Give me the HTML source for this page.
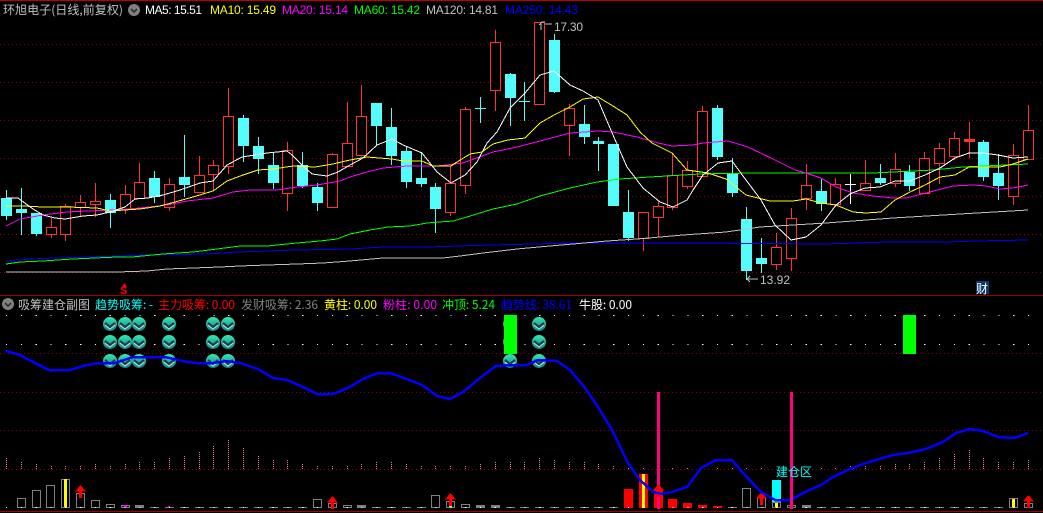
<!DOCTYPE html>
<html><head><meta charset="utf-8"><style>
html,body{margin:0;padding:0;background:#000;width:1043px;height:513px;overflow:hidden}
svg{display:block}
text{font-family:"Liberation Sans","WenQuanYi Zen Hei","Noto Sans CJK SC",sans-serif;font-size:12px}
.c{font-family:"WenQuanYi Zen Hei","Noto Sans CJK SC","Liberation Sans",sans-serif}
.l{fill:none;shape-rendering:crispEdges}
</style></head><body>
<svg width="1043" height="513" viewBox="0 0 1043 513" xmlns="http://www.w3.org/2000/svg">
<defs>
<linearGradient id="g" x1="0" y1="0" x2="0" y2="1"><stop offset="0" stop-color="#35e8b0"/><stop offset="1" stop-color="#158088"/></linearGradient>
<g id="i"><circle r="7" fill="url(#g)"/><path d="M-5 1L0 5L5 1" fill="none" stroke="#b8e8e0" stroke-width="1.2"/><path d="M-5 -1L0 3L5 -1" fill="none" stroke="#1d3f4d" stroke-width="2.2"/></g>
<path id="a" d="M0 0L5.500 6.500H1.500V13H-1.500V6.500H-5.500Z" fill="#ff0000" shape-rendering="crispEdges"/>
<g id="m"><circle r="6" fill="#808080"/><path d="M-3 -1L0 2L3 -1" fill="none" stroke="#303030" stroke-width="1.6"/></g>
</defs>
<rect width="1043" height="513" fill="#000"/>
<rect x="0" y="0" width="1043" height="1" fill="#c00000"/>
<rect x="0" y="295" width="1043" height="1" fill="#a00000"/>
<rect x="0" y="511" width="1043" height="1" fill="#a00000"/>
<path class="l" stroke="#900000" stroke-dasharray="1 3" d="M0 44.500H1043M0 82.500H1043M0 120.500H1043M0 158.500H1043M0 196.500H1043M0 234.500H1043M0 272.500H1043M0 353.500H1043M0 392.500H1043M0 430.500H1043M0 469.500H1043"/>

<!-- red wicks -->
<path class="l" stroke="#ff3232" d="M51.500 218V238M65.500 204V241M80.500 195V217M95.500 183V217M125.500 185V214M139.500 163V198M169.500 178V211M199.500 156V193M213.500 160V190M228.500 88V174M287.500 142V211M332.500 153V207M347.500 102V166M361.500 85V157M450.500 166V216M465.500 107V194M495.500 30V111M539.500 22V104M569.500 104V156M643.500 212V251M658.500 201V237M672.500 154V210M687.500 161V189M702.500 106V176M776.500 233V270M791.500 208V271M806.500 164V210M835.500 178V207M865.500 160V190M895.500 153V187M924.500 152V193M939.500 143V184M954.500 132V160M969.500 122V158M1013.500 144V205M1028.500 105V159"/>
<!-- red bodies -->
<path class="l" style="fill:#000" stroke="#ff3232" d="M46.500 227.500h10v7h-10zM60.500 206.500h10v28h-10zM75.500 202.500h10v5h-10zM90.500 201.500h10v3h-10zM120.500 194.500h10v15h-10zM134.500 182.500h10v16h-10zM164.500 184.500h10v23h-10zM194.500 175.500h10v17h-10zM208.500 165.500h10v9h-10zM223.500 116.500h10v50h-10zM282.500 150.500h10v43h-10zM327.500 154.500h10v53h-10zM342.500 143.500h10v23h-10zM356.500 116.500h10v39h-10zM445.500 183.500h10v29h-10zM460.500 109.500h10v76h-10zM490.500 42.500h10v48h-10zM534.500 22.500h10v82h-10zM564.500 108.500h10v17h-10zM638.500 212.500h10v26h-10zM653.500 206.500h10v11h-10zM667.500 175.500h10v32h-10zM682.500 170.500h10v16h-10zM697.500 111.500h10v65h-10zM771.500 247.500h10v17h-10zM786.500 218.500h10v40h-10zM801.500 185.500h10v13h-10zM830.500 184.500h10v20h-10zM860.500 183.500h10v7h-10zM890.500 169.500h10v14h-10zM919.500 158.500h10v35h-10zM934.500 148.500h10v15h-10zM949.500 138.500h10v18h-10zM1008.500 155.500h10v41h-10zM1023.500 130.500h10v29h-10z"/>
<rect x="964" y="139" width="11" height="3" fill="#ff3232"/>
<!-- cyan wicks -->
<path class="l" stroke="#54fcfc" d="M6.500 190V220M21.500 188V235M36.500 213V236M110.500 194V228M154.500 171V203M184.500 135V197M243.500 115V162M258.500 137V174M273.500 152V189M302.500 152V188M317.500 183V211M376.500 103V145M391.500 108V165M406.500 146V188M421.500 152V187M435.500 183V233M480.500 97V123M475 108.500H486M510.500 73V126M524.500 82V121M519 101.500H530M554.500 34V93M584.500 105V144M598.500 137V171M628.500 190V241M717.500 105V160M732.500 158V197M746.500 207V280M761.500 238V273M821.500 179V211M880.500 164V185M909.500 165V191M983.500 140V181M998.500 154V200"/>
<!-- cyan bodies -->
<path fill="#54fcfc" shape-rendering="crispEdges" d="M1 198h11v18h-11zM16 209h11v4h-11zM31 213h11v21h-11zM105 200h11v13h-11zM149 178h11v19h-11zM179 177h11v8h-11zM238 118h11v28h-11zM253 146h11v13h-11zM268 165h11v18h-11zM297 165h11v21h-11zM312 187h11v16h-11zM371 103h11v23h-11zM386 127h11v29h-11zM401 151h11v31h-11zM416 178h11v6h-11zM430 187h11v22h-11zM505 74h11v24h-11zM549 40h11v52h-11zM579 124h11v13h-11zM593 141h11v3h-11zM608 144h11v62h-11zM623 212h11v26h-11zM712 108h11v49h-11zM727 173h11v20h-11zM741 219h11v52h-11zM756 258h11v6h-11zM816 191h11v13h-11zM875 178h11v5h-11zM904 172h11v14h-11zM978 142h11v35h-11zM993 173h11v13h-11z"/>
<path class="l" stroke="#fff" d="M850.500 174V204M845 184.500H856"/>

<!-- MA lines -->
<polyline class="l" stroke="#0000ff" points="6,261 30,259 57,258 90,257 147,255 207,254 237,252 297,250 350,249 383,247 428,247 490,245 577,243 700,243 826,244 886,242 946,242 976,241 1028,240"/>
<polyline class="l" stroke="#00ff00" points="6,264 20,262 43,261 73,259 117,257 132,257 163,254 193,252 217,249 240,246 267,246 297,243 320,241 337,239 350,234 370,230 388,227 410,226 427,223 453,221 467,217 493,209 517,204 540,196 570,188 597,182 620,179 650,177 700,174 753,173 873,173 933,170 963,167 1028,164"/>
<polyline class="l" stroke="#c0c0c0" points="6,272 117,272 147,271 167,269 193,268 220,267 240,266 267,265 297,264 323,263 350,261 383,258 443,258 460,256 483,253 517,249 550,246 573,244 607,241 637,239 683,235 726,232 760,227 826,223 893,218 960,214 1028,210"/>
<polyline class="l" stroke="#ff00ff" points="6,226 20,219 43,215 67,212 87,211 117,210 140,208 167,205 187,201 213,198 233,192 250,190 277,190 297,187 317,185 340,181 350,177 367,172 383,168 407,166 437,166 463,163 493,152 517,147 540,141 570,133 598,131 613,132 637,137 658,143 672,146 693,145 703,143 728,141 748,147 775,160 795,170 806,173 821,178 836,187 853,193 873,196 893,198 906,198 926,193 953,186 973,185 986,186 1000,189 1013,188 1028,185"/>
<polyline class="l" stroke="#ffff00" points="6,206 23,206 43,207 67,207 97,208 110,211 140,209 160,206 175,202 193,197 213,191 227,181 243,175 258,170 273,169 293,166 315,167 333,164 350,160 367,157 392,159 403,161 422,161 433,166 451,166 457,162 470,154 482,152 493,144 508,140 525,138 540,123 554,115 570,107 583,99 598,97 613,106 627,115 640,132 652,143 672,153 687,170 708,173 726,179 746,195 770,201 793,201 806,199 821,203 836,205 853,212 866,213 881,212 895,200 910,192 925,185 940,177 955,175 969,167 1000,167 1013,164 1028,159"/>
<polyline class="l" stroke="#ffffff" points="6,198 18,198 33,209 43,215 55,218 65,219 83,216 97,215 110,212 125,207 135,199 148,198 163,195 180,190 200,183 213,181 220,173 227,165 242,157 267,153 287,151 292,155 302,165 312,174 327,176 338,172 350,165 363,158 377,145 392,139 403,145 422,153 437,172 451,183 465,175 477,162 487,143 497,132 510,108 525,93 540,75 554,71 570,85 583,91 598,100 613,135 627,167 643,188 660,202 673,207 687,200 693,190 703,175 718,163 732,161 746,180 761,200 775,225 791,240 806,237 821,225 836,205 850,194 865,188 880,187 895,181 910,181 925,175 940,168 955,158 969,153 983,153 998,155 1013,158 1028,157"/>

<!-- price labels -->
<path class="l" stroke="#c0c0c0" d="M541 24V30M539 25L542 22H545M545 24H552"/>
<text x="554" y="31" fill="#c0c0c0" textLength="29">17.30</text>
<path class="l" stroke="#c0c0c0" d="M747 279H758M747 279L750 276M747 279L750 282"/>
<text x="760" y="284" fill="#c0c0c0" textLength="30">13.92</text>
<path d="M124.500 283L122 287H127Z" fill="#ff0000" shape-rendering="crispEdges"/>
<text x="120" y="294" fill="#ff0000" font-weight="bold" style="font-size:11px">S</text>
<rect x="976" y="281" width="13" height="13" fill="#0a3a6a"/>
<text class="c" x="976" y="293" fill="#fff">财</text>

<!-- header -->
<text class="c" x="3" y="14" fill="#c0c0c0" textLength="120" lengthAdjust="spacingAndGlyphs">环旭电子(日线,前复权)</text>
<use href="#m" x="134" y="10"/>
<text x="145" y="14" fill="#fff" textLength="57">MA5: 15.51</text>
<text x="210" y="14" fill="#ffff00" textLength="66">MA10: 15.49</text>
<text x="282" y="14" fill="#ff00ff" textLength="66">MA20: 15.14</text>
<text x="354" y="14" fill="#00ff00" textLength="66">MA60: 15.42</text>
<text x="426" y="14" fill="#c0c0c0" textLength="72">MA120: 14.81</text>
<text x="505" y="14" fill="#0000ff" textLength="73">MA250: 14.43</text>

<!-- sub header -->
<use href="#m" x="8" y="304"/>
<g class="c">
<text class="c" x="18" y="309" fill="#c0c0c0">吸筹建仓副图</text>
<text class="c" x="95" y="309" fill="#00ffff" textLength="58">趋势吸筹: -</text>
<text class="c" x="158" y="309" fill="#ff0000" textLength="77">主力吸筹: 0.00</text>
<text class="c" x="241" y="309" fill="#808080" textLength="77">发财吸筹: 2.36</text>
<text class="c" x="324" y="309" fill="#ffff00" textLength="53">黄柱: 0.00</text>
<text class="c" x="383" y="309" fill="#ff00ff" textLength="54">粉柱: 0.00</text>
<text class="c" x="442" y="309" fill="#00ff00" textLength="53">冲顶: 5.24</text>
<text class="c" x="501" y="309" fill="#0000ff" textLength="71">趋势线: 38.61</text>
<text class="c" x="579" y="309" fill="#ffffff" textLength="53">牛股: 0.00</text>
</g>

<!-- white dot rows -->
<path class="l" stroke="#fff" stroke-dasharray="1.2 13.61" d="M6 315.500H1030M6 344.500H1030"/>

<!-- icons -->
<use href="#i" x="110" y="324"/><use href="#i" x="125" y="324"/><use href="#i" x="139" y="324"/><use href="#i" x="169" y="324"/><use href="#i" x="213" y="324"/><use href="#i" x="228" y="324"/><use href="#i" x="510" y="324"/><use href="#i" x="539" y="324"/>
<use href="#i" x="110" y="342"/><use href="#i" x="125" y="342"/><use href="#i" x="139" y="342"/><use href="#i" x="169" y="342"/><use href="#i" x="213" y="342"/><use href="#i" x="228" y="342"/><use href="#i" x="510" y="342"/><use href="#i" x="539" y="342"/>
<use href="#i" x="110" y="361"/><use href="#i" x="125" y="361"/><use href="#i" x="139" y="361"/><use href="#i" x="169" y="361"/><use href="#i" x="213" y="361"/><use href="#i" x="228" y="361"/><use href="#i" x="510" y="361"/><use href="#i" x="539" y="361"/>
<rect x="504" y="315" width="13" height="39" fill="#00ff00"/>
<rect x="903" y="315" width="13" height="39" fill="#00ff00"/>

<!-- pink dotted bars -->
<path class="l" stroke="#ff8080" stroke-dasharray="1 1" d="M6.500 469V457M21.500 469V461M36.500 469V464M51.500 469V465M65.500 469V465M80.500 469V465M95.500 469V464M110.500 469V465M125.500 469V464M139.500 469V461M154.500 469V461M169.500 469V458M184.500 469V456M199.500 469V451M213.500 469V446M228.500 469V440M243.500 469V448M258.500 469V455M273.500 469V460M287.500 469V460M302.500 469V464M317.500 469V465M332.500 469V465M347.500 469V465M361.500 469V463M376.500 469V461M391.500 469V462M406.500 469V464M421.500 469V465M435.500 469V466M450.500 469V466M465.500 469V465M480.500 469V463M495.500 469V461M510.500 469V461M524.500 469V461M539.500 469V458M554.500 469V459M569.500 469V461M584.500 469V462M598.500 469V464M613.500 469V465M628.500 469V467M643.500 469V467M672.500 469V467M687.500 469V467M717.500 469V467M732.500 469V467M746.500 469V467M761.500 469V468M821.500 469V467M835.500 469V467M850.500 469V466M865.500 469V465M880.500 469V466M895.500 469V464M909.500 469V463M924.500 469V461M939.500 469V458M954.500 469V454M969.500 469V449M983.500 469V457M998.500 469V461M1013.500 469V461M1028.500 469V459"/>

<!-- bottom red bars -->
<path fill="#ff0000" shape-rendering="crispEdges" d="M624 489h9v19h-9zM639 474h9v34h-9zM654 489h9v19h-9zM668 499h9v9h-9zM683 503h9v5h-9zM698 505h9v3h-9zM713 506h9v2h-9z"/>
<!-- grey boxes -->
<path class="l" stroke="#808080" d="M17.500 498.500h8v9h-8zM32.500 490.500h8v17h-8zM46.500 485.500h8v22h-8zM61.500 479.500h8v28h-8zM76.500 493.500h8v14h-8zM91.500 500.500h8v7h-8zM106.500 504.500h8v3h-8zM121.500 505.500h8v2h-8zM313.500 499.500h8v8h-8zM328.500 503.500h8v4h-8zM343.500 505.500h8v2h-8zM431.500 495.500h8v12h-8zM446.500 501.500h8v6h-8zM461.500 504.500h8v3h-8zM742.500 488.500h8v19h-8zM757.500 497.500h8v10h-8zM772.500 502.500h8v5h-8zM787.500 505.500h8v2h-8zM1009.500 498.500h8v9h-8zM1024.500 503.500h8v4h-8z"/>
<path fill="#808080" shape-rendering="crispEdges" d="M135 505h9v3h-9zM357 505h9v3h-9zM476 505h9v3h-9zM491 505h9v3h-9zM802 505h9v3h-9z"/>
<path class="l" stroke="#808080" d="M150 507.500h9M165 507.500h9M180 507.500h9M195 507.500h9M209 507.500h9M224 507.500h9M239 507.500h9M254 507.500h9M269 507.500h9M283 507.500h9M298 507.500h9M372 507.500h9M387 507.500h9M402 507.500h9M417 507.500h9M506 507.500h9M520 507.500h9M535 507.500h9M550 507.500h9M565 507.500h9M580 507.500h9M594 507.500h9M609 507.500h9M728 507.500h9M817 507.500h9M831 507.500h9M846 507.500h9M861 507.500h9M876 507.500h9M891 507.500h9M905 507.500h9M920 507.500h9M935 507.500h9M950 507.500h9M965 507.500h9M979 507.500h9M994 507.500h9"/>
<!-- yellow centres -->
<path fill="#ffff00" shape-rendering="crispEdges" d="M64 479h3v28h-3zM642 474h3v34h-3zM331 504h3v3h-3zM449 502h3v5h-3zM775 503h3v4h-3zM1012 499h3v8h-3z"/>
<rect x="772" y="480" width="9" height="22" fill="#00ffff"/>
<rect x="124" y="505" width="3" height="3" fill="#ff00ff"/>
<rect x="168" y="506" width="2" height="2" fill="#ff00ff"/>
<path class="l" stroke="#fff" stroke-dasharray="1.2 13.61" d="M6 507.500H1030"/>

<rect x="657" y="392" width="3" height="117" fill="#ff0080"/>
<!-- arrows -->
<use href="#a" x="80.500" y="485"/><use href="#a" x="332.500" y="496"/><use href="#a" x="450.500" y="493"/><use href="#a" x="658.500" y="484"/><use href="#a" x="761.500" y="492"/><use href="#a" x="1028.500" y="495"/>

<!-- blue thick line -->
<polyline fill="none" stroke="#0000ff" stroke-width="2.500" shape-rendering="crispEdges" stroke-linejoin="round" points="6,351 20,355 33,362 49,370 70,370 83,366 98,363 115,363 133,357 165,357 187,362 197,363 213,363 227,361 240,363 258,369 273,378 287,380 303,387 317,394 333,394 348,388 363,379 378,373 390,373 407,379 422,385 437,396 450,399 463,392 480,378 496,366 510,365 527,365 538,360 557,361 570,370 585,388 598,407 612,430 628,463 640,480 653,492 662,494 672,492 687,487 693,479 701,468 716,460 732,460 743,473 761,492 775,500 791,500 803,493 821,485 833,477 850,469 866,463 893,455 908,453 926,449 943,442 956,433 970,429 983,431 998,437 1015,438 1028,433"/>
<rect x="790" y="392" width="3" height="117" fill="#ff0080"/>
<text class="c" x="776" y="476" fill="#00ffff">建仓区</text>
</svg>
</body></html>
